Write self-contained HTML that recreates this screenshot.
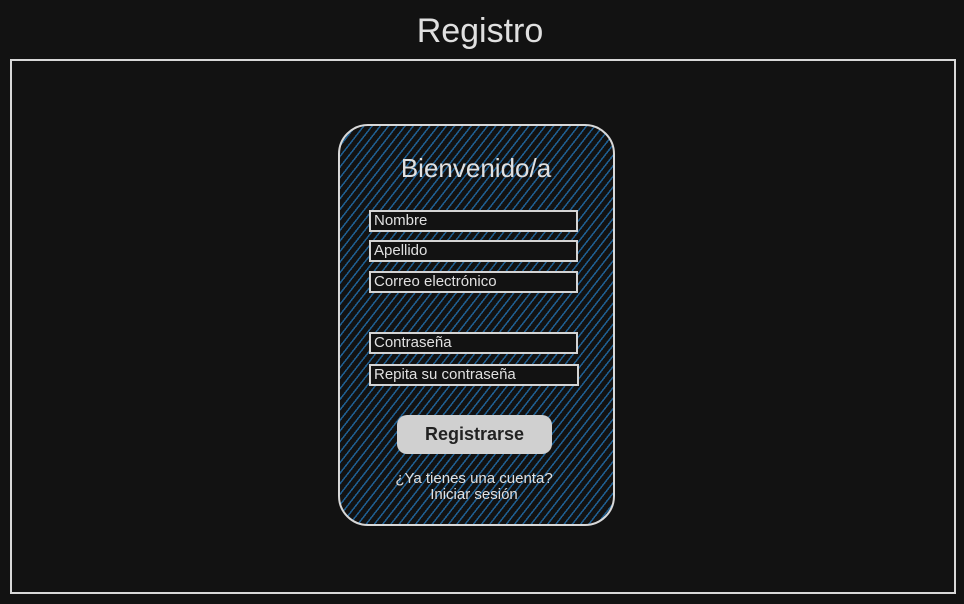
<!DOCTYPE html>
<html><head><meta charset="utf-8"><style>
body{margin:0;width:964px;height:604px;background:#121212;font-family:"Liberation Sans",sans-serif;color:#ddd;position:relative;overflow:hidden}
.t{position:absolute;left:0;width:960px;text-align:center;top:12px;font-size:34px;color:#e0e0e0}
.frame{position:absolute;left:10px;top:59px;width:942px;height:531px;border:2px solid #d8d8d8}
.card{position:absolute;left:338px;top:124px;width:273px;height:398px;border:2.5px solid #d8d8d8;border-radius:30px;
background:repeating-linear-gradient(128deg,#121212 0 5px,#1f5f92 5px 6.5px)}
.h{position:absolute;left:338px;width:276px;text-align:center;top:153px;font-size:26px;color:#e0e0e0}
.in{position:absolute;left:369px;width:202px;height:18px;border:2px solid #d4d4d4;background:#121212;font-size:15px;line-height:18px;padding-left:3px;color:#e0e0e0}
.btn{position:absolute;left:397px;top:415px;width:155px;height:39px;border-radius:10px;background:#d0d0d0;color:#222;font-weight:bold;font-size:18px;text-align:center;line-height:39px}
.l{position:absolute;left:336px;width:276px;text-align:center;top:471px;font-size:15px;line-height:16px;color:#e0e0e0}
</style></head><body>
<div class="t">Registro</div>
<div class="frame"></div>
<div class="card"></div>
<div class="h">Bienvenido/a</div>
<div class="in" style="top:210px">Nombre</div>
<div class="in" style="top:240px">Apellido</div>
<div class="in" style="top:271px">Correo electrónico</div>
<div class="in" style="top:332px">Contraseña</div>
<div class="in" style="top:364px;width:203px">Repita su contraseña</div>
<div class="btn">Registrarse</div>
<div class="l">¿Ya tienes una cuenta?<br>Iniciar sesión</div>
</body></html>
